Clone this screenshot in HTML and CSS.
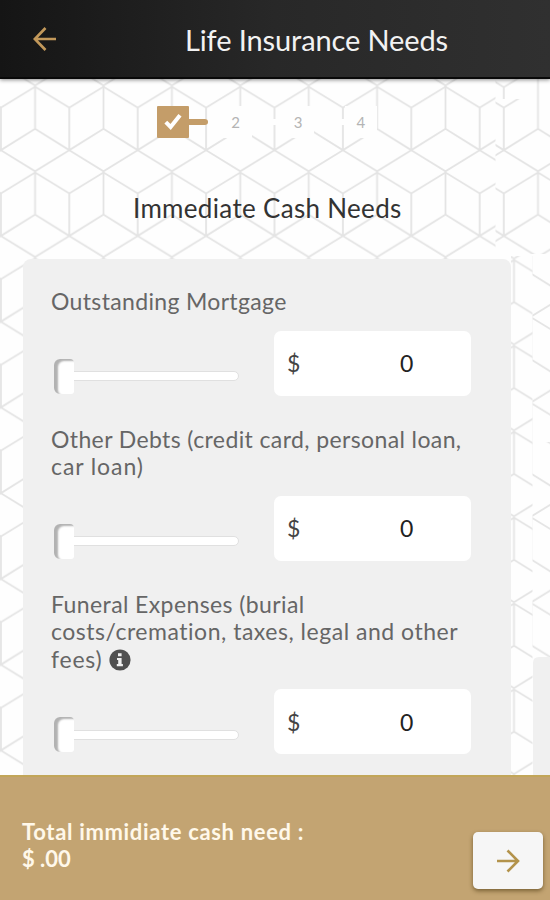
FILE: index.html
```html
<!DOCTYPE html>
<html lang="en">
<head>
<meta charset="utf-8">
<title>Life Insurance Needs</title>
<link rel="stylesheet" href="styles.css">
</head>
<body>
<div class="screen">
  <svg class="backdrop" width="550" height="900" aria-hidden="true">
    <defs>
      <g id="cube" fill="none" stroke="#e4e4e4" stroke-width="1.8">
        <path d="M0 21.5 34.2 0.6 68.4 21.5M34.2 0.6V42.7M0 64 34.2 42.7 68.4 64M0 21.5V64L34.2 85.1 68.4 64V21.5"/>
      </g>
      <pattern id="main" patternUnits="userSpaceOnUse" x="0.9" y="86.2" width="68.4" height="85.75"><use href="#cube"/></pattern>
      <pattern id="right" patternUnits="userSpaceOnUse" x="503.8" y="86.2" width="68.4" height="85.75"><use href="#cube"/></pattern>
      <pattern id="rightTop" patternUnits="userSpaceOnUse" x="503.8" y="65.7" width="68.4" height="85.75"><use href="#cube"/></pattern>
      <pattern id="side" patternUnits="userSpaceOnUse" x="479.8" y="345.3" width="68.4" height="85.9"><use href="#cube"/></pattern>
      <pattern id="edge" patternUnits="userSpaceOnUse" x="497.3" y="317" width="68.4" height="85.75"><use href="#cube"/></pattern>
      <pattern id="edgeLow" patternUnits="userSpaceOnUse" x="497.3" y="517" width="68.4" height="85.75"><use href="#cube"/></pattern>
    </defs>
    <rect width="495.5" height="900" fill="url(#main)"/>
    <rect x="495.5" width="54.5" height="99" fill="url(#rightTop)"/>
    <rect x="495.5" y="99" width="54.5" height="155" fill="url(#right)"/>
    <rect x="511" y="256" width="21.5" height="644" fill="url(#side)"/>
    <rect x="532.5" y="256" width="17.5" height="186" fill="url(#edge)"/>
    <rect x="532.5" y="442" width="17.5" height="215" fill="url(#edgeLow)"/>
    <path d="M550 657H539Q533 657 533 663V900H550Z" fill="#f0f0f0"/>
  </svg>

  <header class="topbar">
    <svg class="back" width="24" height="26" viewBox="0 0 24 26"><path d="M23 13H2M12.5 2 1.8 13l10.7 11"/></svg>
    <h1 class="title">Life Insurance Needs</h1>
  </header>

  <main class="content">
    <div class="steps">
      <div class="step done"><svg width="18" height="17" viewBox="0 0 18 17"><path d="M1.8 9.2 6.6 14 16 2.2"/></svg></div>
      <div class="link"><span class="progress"></span></div>
      <div class="step">2</div>
      <div class="link"></div>
      <div class="step">3</div>
      <div class="link"></div>
      <div class="step">4</div>
    </div>
    <h2 class="heading">Immediate Cash Needs</h2>

    <section class="card">
      <div class="field">
        <div class="label"><span class="l1">Outstanding Mortgage</span></div>
        <div class="row">
          <div class="slider"><span class="thumb"></span><span class="track"></span></div>
          <div class="amount"><span class="cur">$</span><span class="num">0</span></div>
        </div>
      </div>
      <div class="field">
        <div class="label"><span class="l2">Other Debts (credit card, personal loan,</span><br><span class="l3">car loan)</span></div>
        <div class="row">
          <div class="slider"><span class="thumb"></span><span class="track"></span></div>
          <div class="amount"><span class="cur">$</span><span class="num">0</span></div>
        </div>
      </div>
      <div class="field">
        <div class="label tall"><span class="l4">Funeral Expenses (burial</span><br><span class="l5">costs/cremation, taxes, legal and other</span><br><span class="l6">fees)</span><svg class="info" width="22" height="22" viewBox="0 0 22 22"><circle cx="11" cy="11" r="10.6" fill="#505050"/><path d="M9 4.2h3.6v3H9zM8 9h4.6v6h1.3v2.2H7.8V15h1.4v-3.9H8z" fill="#f0f0f0"/></svg></div>
        <div class="row">
          <div class="slider"><span class="thumb"></span><span class="track"></span></div>
          <div class="amount"><span class="cur">$</span><span class="num">0</span></div>
        </div>
      </div>
    </section>
  </main>

  <footer class="total">
    <div class="sum"><span class="t1">Total immidiate cash need :</span><br><span class="t2">$ .00</span></div>
    <div class="next"><svg width="24" height="24" viewBox="0 0 24 24"><path d="M1 12h20.5M11.5 1.5 22 12 11.5 22.5"/></svg></div>
  </footer>
</div>
</body>
</html>
```
FILE: styles.css
```css
* { box-sizing: border-box; }
body { margin: 0; font-family: Lato, "Liberation Sans", sans-serif; }
.screen { position: relative; width: 550px; height: 900px; overflow: hidden; background: #fefefe; display: flex; flex-direction: column; }
.backdrop { position: absolute; left: 0; top: 0; }
.topbar { position: relative; z-index: 1; flex: none; height: 79px; display: flex; align-items: center; padding-left: 33px; background: linear-gradient(90deg, #151515, #282828 50%, #303030); border-bottom: 2px solid #090909; box-shadow: 0 1px 4px rgba(0,0,0,.45); }
.back { flex: none; fill: none; stroke: #c2985a; stroke-width: 2.7; }
.title { margin: 2px 0 0 128px; font-size: 29px; line-height: 36px; font-weight: 400; letter-spacing: -0.12px; color: #f2f2f2; white-space: nowrap; }
.content { position: relative; flex: 1; min-height: 0; overflow: hidden; display: flex; flex-direction: column; }
.steps { display: flex; flex: none; align-items: center; margin: 26px 0 0 157px; height: 33px; }
.step { width: 32px; height: 32px; background: #fefefe; display: flex; align-items: center; justify-content: center; font-size: 15px; font-weight: 400; color: #b4b4b4; }
.step.done { background: #c49d69; border-radius: 1px; }
.step.done svg { fill: none; stroke: #fff; stroke-width: 4; }
.link { width: 30.6px; height: 6px; background: #fefefe; }
.progress { display: block; width: 19px; height: 6px; background: #c49d69; border-radius: 0 3px 3px 0; }
.heading { flex: none; margin: 54px 0 0 133px; height: 32px; font-size: 26px; line-height: 32px; font-weight: 400; letter-spacing: .32px; color: #333; white-space: nowrap; }
.card { flex: none; width: 488px; margin: 35px 0 0 23px; padding: 29px 40px 40px 28px; border-radius: 8px; background: #f0f0f0; display: flex; flex-direction: column; gap: 30.5px; }
.label { font-size: 23px; line-height: 27.5px; color: #666; white-space: nowrap; }
.label.tall { padding-bottom: 1px; }
.l1 { letter-spacing: .34px; }
.l2 { letter-spacing: .39px; }
.l3 { letter-spacing: .9px; }
.l4 { letter-spacing: .4px; }
.l5 { letter-spacing: .52px; }
.l6 { letter-spacing: .8px; }
.info { vertical-align: -3px; margin-left: 6px; }
.row { display: flex; justify-content: space-between; height: 64.5px; margin-top: 15px; }
.slider { display: flex; align-items: center; padding: 25px 0 0 3px; height: 66px; }
.thumb { position: relative; z-index: 1; width: 20px; height: 35px; border-radius: 6px 4px 3px 6px; background: #fff; box-shadow: inset 4px 2px 2px #b2b2b2; }
.track { width: 167px; height: 10px; margin-left: -2px; border: 1px solid #e0e0e0; border-radius: 0 5px 5px 0; background: #fff; }
.amount { width: 197px; height: 65px; border-radius: 7px; background: #fff; display: flex; align-items: center; font-size: 23px; color: #222; }
.cur { width: 13px; margin-left: 13px; color: #444; }
.num { margin-left: 100px; }
.total { position: relative; flex: none; height: 125px; background: #c3a472; border-top: 2px solid #c2a659; display: flex; justify-content: space-between; padding: 41px 7px 0 22px; }
.sum { font-size: 22px; line-height: 27px; font-weight: 700; color: #fff8ea; white-space: nowrap; }
.t1 { letter-spacing: .67px; }
.next { width: 70px; height: 57px; margin-top: 14px; border-radius: 5px; background: #f6f6f6; box-shadow: 0 2px 4px rgba(80,60,20,.65); display: flex; align-items: center; justify-content: center; }
.next svg { fill: none; stroke: #b3934b; stroke-width: 2.6; }
```
